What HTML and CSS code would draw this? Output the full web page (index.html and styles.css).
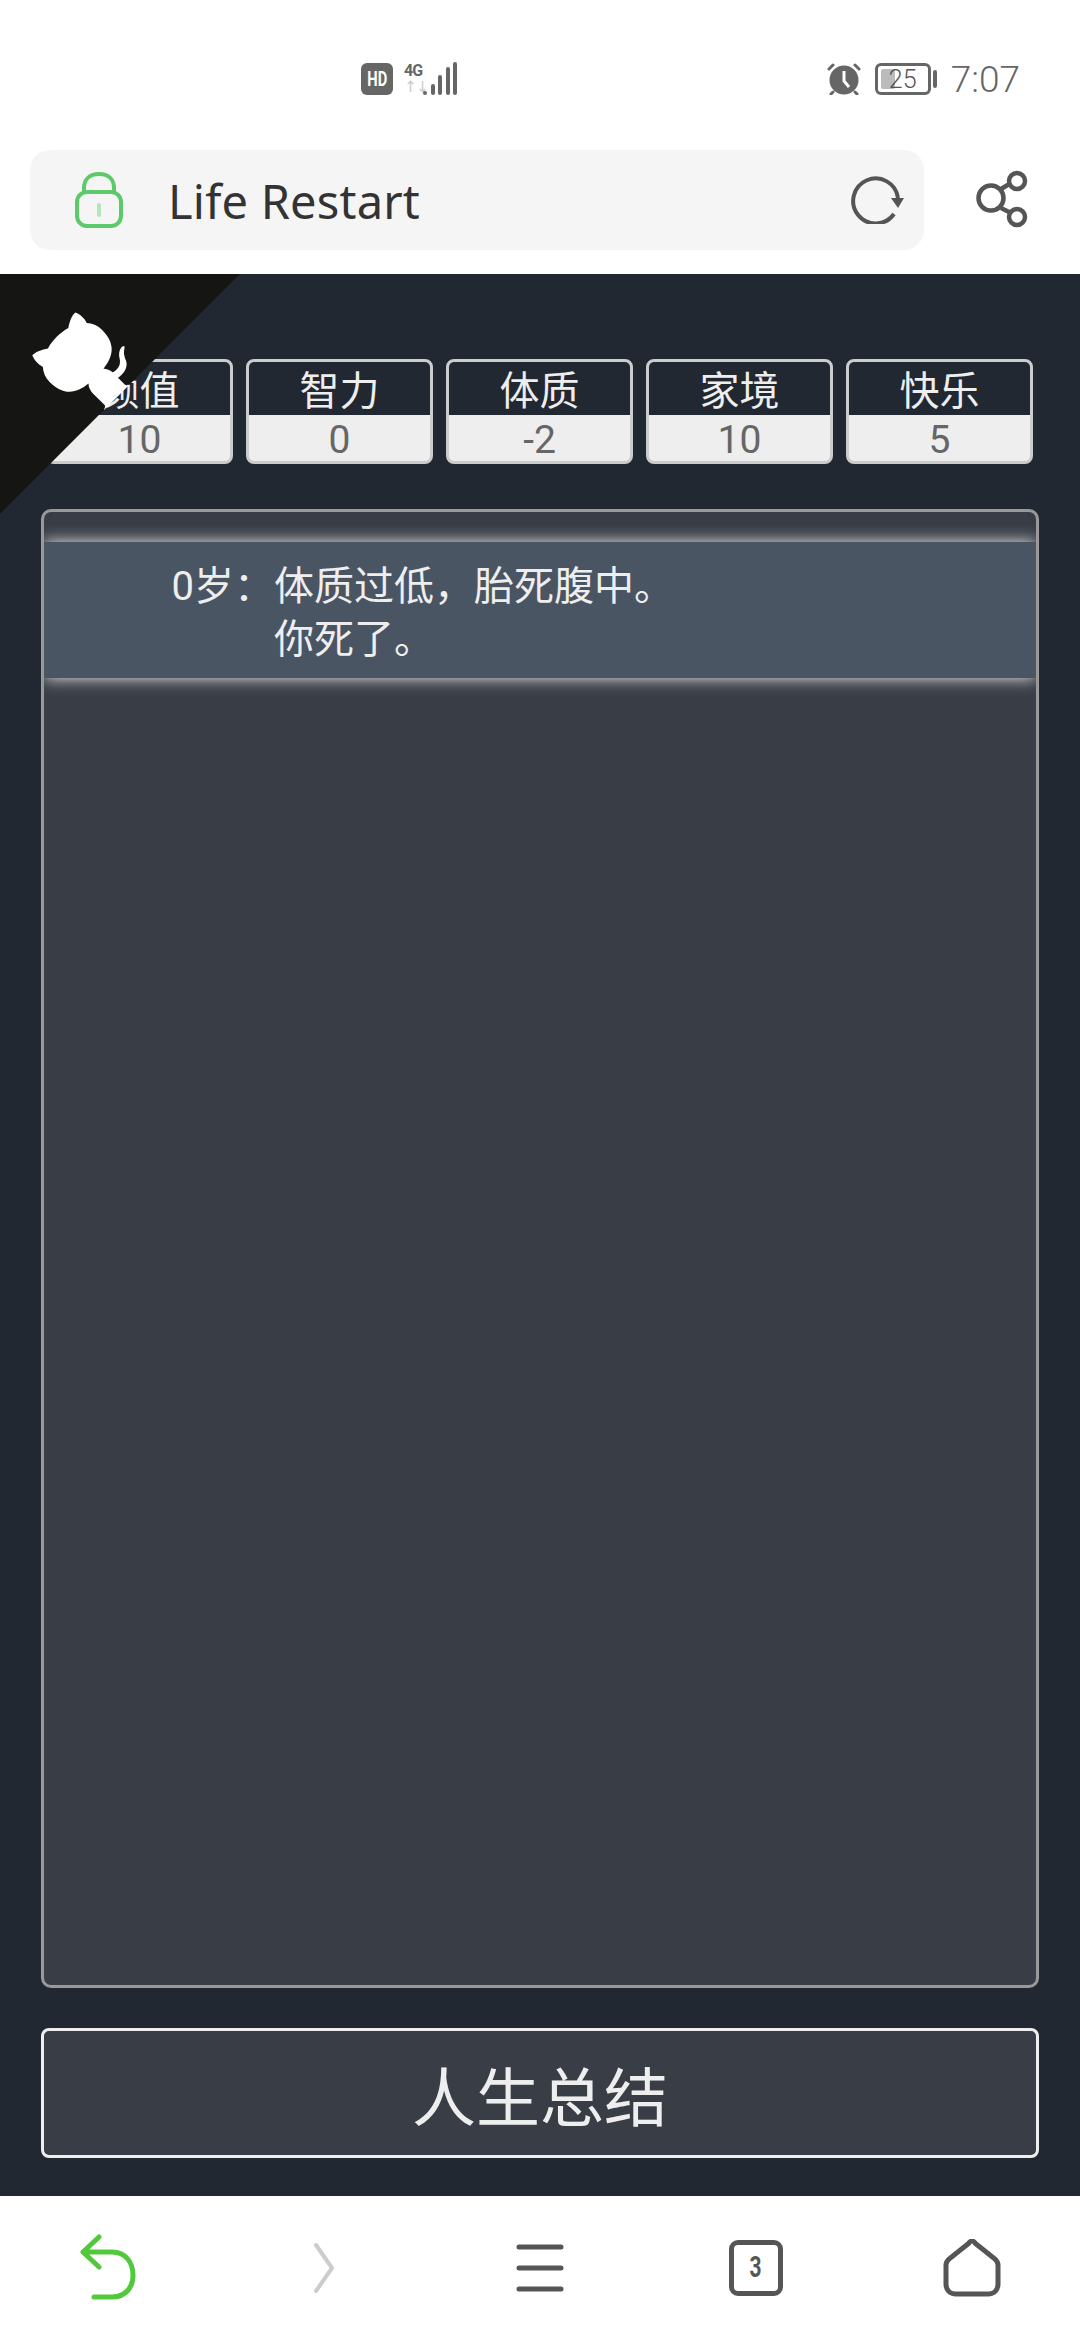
FILE: index.html
```html
<!DOCTYPE html>
<html lang="zh">
<head>
  <meta charset="utf-8">
  <title>Life Restart</title>
  <link rel="stylesheet" href="styles.css">
</head>
<body>

<div class="status">
  <div class="status-left">
    <span class="hd"><span class="narrow">HD</span></span>
    <div class="net">
      <span class="net-4g">4G</span>
      <span class="net-arrows">↑↓</span>
    </div>
    <div class="signal">
      <i class="b1"></i><i class="b2"></i><i class="b3"></i><i class="b4"></i><i class="b5"></i>
    </div>
  </div>
  <div class="status-right">
    <svg class="alarm" viewBox="0 0 34 32" width="34" height="32">
      <circle cx="17" cy="17" r="14.5" fill="#666"/>
      <path d="M17 8V18L22 24" fill="none" stroke="#fff" stroke-width="3"/>
      <path d="M2 6L6 2M32 6L28 2M6 29L4 31M28 29L30 31" fill="none" stroke="#666" stroke-width="3" stroke-linecap="round"/>
    </svg>
    <div class="battery">
      <span class="battery-fill"></span>
      <span class="battery-num">25</span>
    </div>
    <span class="battery-nub"></span>
    <span class="clock">7:07</span>
  </div>
</div>

<div class="urlrow">
  <div class="urlbar">
    <svg class="lock" viewBox="0 0 48 56" width="48" height="56">
      <path d="M9 20V16C9 7 15 2 24 2C33 2 39 7 39 16V20" fill="none" stroke="#5cc96b" stroke-width="4"/>
      <rect x="2" y="20" width="44" height="34" rx="10" fill="none" stroke="#5cc96b" stroke-width="4"/>
      <path d="M24 33V43" stroke="#b4e6ba" stroke-width="4" stroke-linecap="round"/>
    </svg>
    <span class="urltext">Life Restart</span>
    <svg class="reload" viewBox="0 0 56 48" width="56" height="48">
      <path d="M45 38A22.5 22.5 0 1 1 49 22" fill="none" stroke="#555" stroke-width="4"/>
      <path d="M42 22H55L49 32Z" fill="#555"/>
    </svg>
  </div>
  <svg class="share" viewBox="0 0 54 58" width="54" height="58">
    <g fill="none" stroke="#555" stroke-width="4.5">
      <circle cx="17" cy="28" r="12.5"/>
      <circle cx="43" cy="11" r="8"/>
      <circle cx="43" cy="47" r="8"/>
      <path d="M27 19L37 13M27 38L37 43"/>
    </g>
  </svg>
</div>

<div class="main">
  <svg class="corner" viewBox="0 0 250 250" width="240" height="240">
    <g transform="translate(250 0) scale(-1 1)">
      <path d="M0,0 L115,115 L130,115 L142,142 L250,250 L250,0 Z" fill="#151513"/>
      <path d="M128.3,109.0 C113.8,99.7 119.0,89.6 119.0,89.6 C122.0,82.7 120.5,78.6 120.5,78.6 C119.2,72.0 123.4,76.3 123.4,76.3 C127.3,80.9 125.5,87.3 125.5,87.3 C122.9,97.6 130.6,101.9 134.4,103.2" fill="#fff"/>
      <path d="M115.0,115.0 C114.9,115.1 118.7,116.5 119.8,115.4 L133.7,101.6 C136.9,99.2 139.9,98.4 142.2,98.6 C133.8,88.0 127.5,74.4 143.8,58.0 C148.5,53.4 154.0,51.2 159.7,51.0 C160.3,49.4 163.2,43.6 171.4,40.1 C171.4,40.1 176.1,42.5 178.8,56.2 C183.1,58.6 187.2,61.8 190.9,65.4 C194.5,69.0 197.7,73.2 200.1,77.6 C213.8,80.2 216.3,84.9 216.3,84.9 C212.7,93.1 206.9,96.0 205.4,96.6 C205.1,102.4 203.0,107.8 198.3,112.5 C181.9,128.9 168.3,122.5 157.7,114.1 C157.9,116.9 156.7,120.9 152.7,124.9 L141.0,136.5 C139.8,137.7 141.6,141.9 141.8,141.8 Z" fill="#fff"/>
    </g>
  </svg>

  <ul class="stats">
    <li class="stat"><div class="stat-name">颜值</div><div class="stat-val">10</div></li>
    <li class="stat"><div class="stat-name">智力</div><div class="stat-val">0</div></li>
    <li class="stat"><div class="stat-name">体质</div><div class="stat-val">-2</div></li>
    <li class="stat"><div class="stat-name">家境</div><div class="stat-val">10</div></li>
    <li class="stat"><div class="stat-name">快乐</div><div class="stat-val">5</div></li>
  </ul>

  <ul class="log">
    <li class="log-row">
      <span class="log-age">0岁：</span>
      <span class="log-text">体质过低，胎死腹中。<br>你死了。</span>
    </li>
  </ul>

  <button class="summary">人生总结</button>
</div>

<div class="nav">
  <svg class="nav-back" viewBox="0 0 60 70" width="60" height="70">
    <path d="M19 4L3 19L19 34M3 19H32C46 19 53 30 53 42C53 54 46 64 32 64H14" fill="none" stroke="#52c83c" stroke-width="5" stroke-linecap="round" stroke-linejoin="round"/>
  </svg>
  <svg viewBox="0 0 24 52" width="24" height="52">
    <path d="M4 3L20 26L4 49" fill="none" stroke="#ccc" stroke-width="4" stroke-linecap="round" stroke-linejoin="round"/>
  </svg>
  <svg viewBox="0 0 48 48" width="48" height="48">
    <path d="M3 3H45M3 24H45M3 45H45" stroke="#555" stroke-width="5" stroke-linecap="round"/>
  </svg>
  <div class="tabs"><span class="narrow">3</span></div>
  <svg viewBox="0 0 58 58" width="58" height="58">
    <path d="M29 2C27.5 2 26.5 3 25.5 4.500L6 20C4 22 3 23 3 26V45C3 51 7 55 13 55H45C51 55 55 51 55 45V26C55 23 54 22 52 20L32.500 4.500C31.500 3 30.500 2 29 2Z" fill="none" stroke="#555" stroke-width="5"/>
  </svg>
</div>

</body>
</html>
```

FILE: styles.css
```css
html, body {
  margin: 0;
  padding: 0;
  background: #fff;
}

body {
  width: 1080px;
  height: 2340px;
  display: flex;
  flex-direction: column;
  overflow: hidden;
  font-family: Roboto, "Noto Sans CJK SC", sans-serif;
}

ul {
  margin: 0;
  padding: 0;
  list-style: none;
}

.narrow {
  display: inline-block;
  transform: scaleX(0.7);
}

/* status bar */

.status {
  height: 150px;
  box-sizing: border-box;
  padding: 62px 60px 0 361px;
  display: flex;
  justify-content: space-between;
  align-items: flex-start;
  color: #666;
}

.status-left, .status-right {
  display: flex;
  align-items: flex-start;
}

.hd {
  width: 32px;
  height: 32px;
  margin-top: 1px;
  border-radius: 6px;
  background: #666;
  color: #fff;
  font-size: 21px;
  font-weight: 700;
  line-height: 32px;
  text-align: center;
}

.net {
  width: 19px;
  margin-left: 11px;
  display: flex;
  flex-direction: column;
}

.net-4g {
  font-size: 16px;
  font-weight: 700;
  line-height: 17px;
  letter-spacing: -1px;
}

.net-arrows {
  font-size: 13px;
  font-weight: 700;
  line-height: 16px;
  color: #ccc;
  letter-spacing: -1px;
}

.signal {
  height: 33px;
  display: flex;
  align-items: flex-end;
  gap: 3.5px;
}

.signal i {
  width: 4px;
  border-radius: 2px;
  background: #666;
}

.signal .b1 { height: 4px; }
.signal .b2 { height: 11px; }
.signal .b3 { height: 20px; }
.signal .b4 { height: 28px; }
.signal .b5 { height: 33px; }

.alarm {
  margin-top: 1px;
}

.battery {
  width: 56px;
  height: 32px;
  box-sizing: border-box;
  margin-left: 14px;
  margin-top: 1px;
  border: 3px solid #666;
  border-radius: 6px;
  position: relative;
  text-align: center;
  font-size: 25px;
  font-weight: 300;
  line-height: 27px;
}

.battery-fill {
  position: absolute;
  left: 3px;
  top: 3px;
  width: 14px;
  height: 20px;
  background: #bbb;
  border-radius: 2px;
}

.battery-num {
  position: relative;
  color: #555;
}

.battery-nub {
  width: 4px;
  height: 18px;
  margin: 8px 0 0 2px;
  border-radius: 2px;
  background: #666;
}

.clock {
  margin-left: 14px;
  font-size: 37px;
  font-weight: 300;
  line-height: 36px;
}

/* address bar */

.urlrow {
  height: 124px;
  display: flex;
  align-items: flex-start;
  padding-left: 30px;
}

.urlbar {
  width: 894px;
  height: 100px;
  box-sizing: border-box;
  padding: 0 19px 0 45px;
  display: flex;
  align-items: center;
  background: #f5f5f5;
  border-radius: 20px;
}

.urltext {
  flex: 1;
  margin: 2px 0 0 45px;
  font-family: "Noto Sans", sans-serif;
  font-size: 47px;
  letter-spacing: 0.2px;
  color: #333;
}

.share {
  margin: 20px 0 0 50px;
}

/* game area */

.main {
  flex: 1;
  position: relative;
  padding: 85px 41px 38px;
  display: flex;
  flex-direction: column;
  background: #222831;
}

.corner {
  position: absolute;
  left: 0;
  top: 0;
  z-index: 2;
}

.stats {
  margin: 0 6px 0 5px;
  display: flex;
  gap: 13px;
}

.stat {
  flex: 1;
  height: 105px;
  box-sizing: border-box;
  border: 3px solid #ccc;
  border-radius: 8px;
  overflow: hidden;
  text-align: center;
  background: #eee;
}

.stat-name {
  height: 50px;
  padding-top: 3px;
  line-height: 53px;
  font-size: 40px;
  color: #eee;
  background: #222831;
}

.stat-val {
  height: 44px;
  padding-top: 2px;
  line-height: 46px;
  font-size: 39px;
  color: #666;
}

.log {
  flex: 1;
  margin-top: 45px;
  padding-top: 30px;
  border: 3px solid #999;
  border-radius: 10px;
  overflow: hidden;
  background: #393e46;
}

.log-row {
  height: 136px;
  box-sizing: border-box;
  padding: 18px 0 12px;
  display: flex;
  background: #4a5564;
  box-shadow: 0 0 15px #eee;
  color: #eee;
  font-size: 40px;
  line-height: 53px;
}

.log-age {
  width: 230px;
  flex-shrink: 0;
  text-align: right;
}

.summary {
  height: 130px;
  margin-top: 40px;
  padding: 0;
  border: 3px solid #eee;
  border-radius: 8px;
  background: #393e46;
  color: #eee;
  font-family: Roboto, "Noto Sans CJK SC", sans-serif;
  font-size: 64px;
}

/* bottom bar */

.nav {
  height: 144px;
  display: grid;
  grid-template-columns: repeat(5, 1fr);
  justify-items: center;
  align-items: center;
}

.nav-back {
  margin-left: 4px;
}

.tabs {
  width: 54px;
  height: 56px;
  box-sizing: border-box;
  border: 5px solid #555;
  border-radius: 9px;
  color: #555;
  font-size: 30px;
  font-weight: 700;
  line-height: 44px;
  text-align: center;
}
```
